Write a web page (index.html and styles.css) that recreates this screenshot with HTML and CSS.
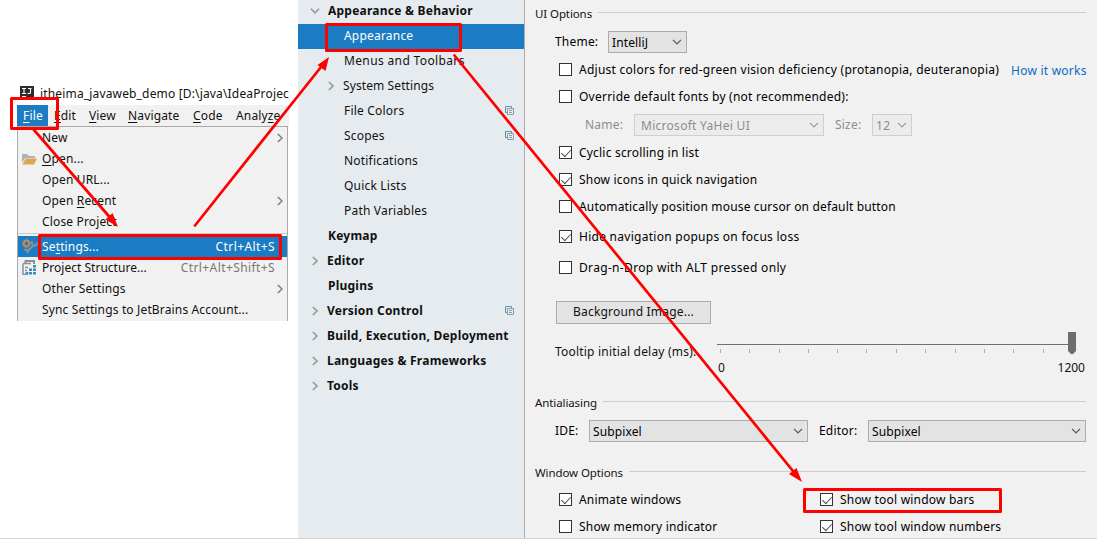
FILE: index.html
```html
<!DOCTYPE html>
<html lang="en">
<head>
<meta charset="utf-8">
<title>Settings</title>
<link rel="stylesheet" href="styles.css">
</head>
<body>
<svg class="defs" width="0" height="0">
  <symbol id="right" viewBox="0 0 6 10"><path d="M.8 1 5 5 .8 9"/></symbol>
  <symbol id="down" viewBox="0 0 10 6"><path d="M1 .8 5 4.8 9 .8"/></symbol>
  <symbol id="copy" viewBox="0 0 9 9"><path d="M2.500 6.500H.5V.5H6.500V2" stroke="#5b93b5"/><path d="M2.500 2.500H8.500V8.500H2.500ZM4 4.500H7M4 6.500H7" stroke="#929ba2"/></symbol>
</svg>
<main class="screen">
  <section class="ide">
    <header class="title">
      <svg width="14" height="13" viewBox="0 0 14 13"><rect width="14" height="13" fill="#2d2d30"/><path d="M2 2.500H6M4 2.500V7.500M2 7.500H6M8 2.500H11.500M10.500 2.500V6.500Q10.500 7.500 9.500 7.500H7.500M2 10.500H6" fill="none" stroke="#fff" stroke-width="1.100"/></svg>
      <span>itheima_javaweb_demo [D:\java\IdeaProjec</span>
    </header>
    <nav class="menubar">
      <span class="on"><u>F</u>ile</span><span class="m-edit"><u>E</u>dit</span><span class="m-view"><u>V</u>iew</span><span class="m-nav"><u>N</u>avigate</span><span class="m-code"><u>C</u>ode</span><span class="m-an">Analy<u>z</u>e</span>
    </nav>
    <div class="popup">
      <div class="item"><i></i><b>New</b><svg class="chev"><use href="#right"/></svg></div>
      <div class="item"><i><svg width="15" height="12" viewBox="0 0 15 12"><path d="M0 1H5L7 3H13V5H3L0 10Z" fill="#a9b4ba"/><path d="M3.500 5.500H15L12 11.500H.5Z" fill="#dca650"/></svg></i><b><u>O</u>pen...</b></div>
      <div class="item"><i></i><b>Open URL...</b></div>
      <div class="item"><i></i><b>Open <u>R</u>ecent</b><svg class="chev"><use href="#right"/></svg></div>
      <div class="item"><i></i><b>Close Project</b></div>
      <hr>
      <div class="item sel"><i><svg width="16" height="16" viewBox="0 0 16 16" fill="none"><circle cx="4.500" cy="4.500" r="2.800" stroke="#bb8959" stroke-width="2.200"/><path d="M4.500 0V1.500M4.500 7.500V9M0 4.500H1.500M7.500 4.500H9" stroke="#bb8959" stroke-width="1.600"/><path d="M4.500 13 12 6M10.500 2C9 4 10 7 12.500 6.500 14 6.500 15 5 15 3.500M2 11C4 9.500 7 11.500 5.500 14" stroke="#87919b" stroke-width="2"/></svg></i><b>Se<u>t</u>tings...</b><em>Ctrl+Alt+S</em></div>
      <div class="item"><i><svg width="15" height="15" viewBox="0 0 15 15"><path d="M2.500 0H13V4H11V2H4.500V3H2.500Z" fill="#87919b"/><path d="M1 3.500H9M1 3.500V14.500H5M3 7.500H6M3 10.500H5" fill="none" stroke="#87919b" stroke-width="1.500"/><path d="M11 5h3v2.500h-3zM7 8.500h3v2.500H7zM11 8.500h3v2.500h-3zM3.500 12h2.800v2.500H3.500zM7 12h3v2.500H7zM11 12h3v2.500h-3z" fill="#3d8db8"/></svg></i><b class="tight">Project Structure...</b><em>Ctrl+Alt+Shift+S</em></div>
      <div class="item"><i></i><b>Other Settings</b><svg class="chev"><use href="#right"/></svg></div>
      <div class="item"><i></i><b>Sync Settings to JetBrains Account...</b></div>
    </div>
  </section>

  <aside class="tree">
    <div class="node top"><svg class="tw open"><use href="#down"/></svg>Appearance &amp; Behavior</div>
    <div class="node sub on">Appearance</div>
    <div class="node sub">Menus and Toolbars</div>
    <div class="node sub par"><svg class="tw"><use href="#right"/></svg>System Settings</div>
    <div class="node sub">File Colors<svg class="copy"><use href="#copy"/></svg></div>
    <div class="node sub">Scopes<svg class="copy"><use href="#copy"/></svg></div>
    <div class="node sub">Notifications</div>
    <div class="node sub">Quick Lists</div>
    <div class="node sub">Path Variables</div>
    <div class="node top leaf">Keymap</div>
    <div class="node top"><svg class="tw"><use href="#right"/></svg>Editor</div>
    <div class="node top leaf">Plugins</div>
    <div class="node top"><svg class="tw"><use href="#right"/></svg>Version Control<svg class="copy"><use href="#copy"/></svg></div>
    <div class="node top"><svg class="tw"><use href="#right"/></svg>Build, Execution, Deployment</div>
    <div class="node top"><svg class="tw"><use href="#right"/></svg>Languages &amp; Frameworks</div>
    <div class="node top"><svg class="tw"><use href="#right"/></svg>Tools</div>
  </aside>

  <section class="panel">
    <h2>UI Options</h2>
    <div class="row fields"><label class="l-theme">Theme:</label><div class="combo c-theme">IntelliJ<svg><use href="#down"/></svg></div></div>
    <div class="row"><span class="box"></span><span class="adjust">Adjust colors for red-green vision deficiency (protanopia, deuteranopia)</span><a>How it works</a></div>
    <div class="row override"><span class="box"></span>Override default fonts by (not recommended):</div>
    <div class="row fields off"><label class="l-name">Name:</label><div class="combo c-name">Microsoft YaHei UI<svg><use href="#down"/></svg></div><label class="l-size">Size:</label><div class="combo c-size">12<svg><use href="#down"/></svg></div></div>
    <div class="row"><span class="box ck"></span>Cyclic scrolling in list</div>
    <div class="row"><span class="box ck"></span>Show icons in quick navigation</div>
    <div class="row auto"><span class="box"></span>Automatically position mouse cursor on default button</div>
    <div class="row hide"><span class="box ck"></span>Hide navigation popups on focus loss</div>
    <div class="row drag"><span class="box"></span>Drag-n-Drop with ALT pressed only</div>
    <div class="btn">Background Image...</div>
    <div class="delay">
      <label>Tooltip initial delay (ms):</label>
      <div class="slider">
        <svg width="369" height="26" viewBox="0 0 369 26"><path d="M0 12.500H352" stroke="#6e6e6e"/><path d="M3.500 17v4M32.500 17v4M62.500 17v4M91.500 17v4M120.500 17v4M149.500 17v4M179.500 17v4M208.500 17v4M238.500 17v4M267.500 17v4M296.500 17v4M326.500 17v4" stroke="#b0b0b0"/><path d="M351 0h8v19l-3 3h-2l-3-3z" fill="#6e6e6e"/></svg>
        <div class="ends"><span>0</span><span>1200</span></div>
      </div>
    </div>
    <h2>Antialiasing</h2>
    <div class="row fields"><label class="l-ide">IDE:</label><div class="combo c-ide">Subpixel<svg><use href="#down"/></svg></div><label class="l-editor">Editor:</label><div class="combo c-editor">Subpixel<svg><use href="#down"/></svg></div></div>
    <h2 class="win">Window Options</h2>
    <div class="pair"><div class="row auto"><span class="box ck"></span>Animate windows</div><div class="row"><span class="box ck"></span>Show tool window bars</div></div>
    <div class="pair"><div class="row"><span class="box"></span>Show memory indicator</div><div class="row"><span class="box ck"></span>Show tool window numbers</div></div>
  </section>

  <div class="baseline"></div>
  <svg class="marks" width="1097" height="540" viewBox="0 0 1097 540">
    <g fill="none" stroke="#f00" stroke-width="3" stroke-linejoin="round">
      <rect x="11.500" y="98.500" width="46" height="30"/>
      <rect x="39.500" y="235.500" width="241" height="23"/>
      <rect x="326.500" y="24.500" width="134" height="26"/>
      <rect x="804.500" y="489.500" width="196" height="22"/>
    </g>
    <g stroke="#f00" stroke-width="2.700" stroke-linecap="round"><path d="M34 130 110 217.500M195 225.500 321 67M454.500 55.500 795 473.500"/></g>
    <g fill="#f00"><path d="M118 227 105.500 219.500 112.500 213Z"/><path d="M329 57 325.500 71 317.500 65Z"/><path d="M802 482 789 474 796.500 468Z"/></g>
  </svg>
</main>
</body>
</html>
```
FILE: styles.css
```css
* { box-sizing: border-box; }
body { margin: 0; background: #fff; font: 12px/16px "Noto Sans", "Open Sans", sans-serif; letter-spacing: .2px; color: #111; }
.defs { position: absolute; }
u { text-underline-offset: 1.5px; text-decoration-thickness: 1px; }
.screen { position: relative; display: flex; width: 1097px; height: 540px; overflow: hidden; white-space: nowrap; }

/* IDE window with the File menu open */
.ide { width: 298px; flex: none; padding: 82px 0 0 17px; }
.title { display: flex; align-items: center; width: 272px; height: 23px; padding-left: 3px; gap: 6px; overflow: hidden; letter-spacing: .16px; }
.title svg { flex: none; margin-top: -3px; }
.menubar { display: flex; width: 272px; height: 21px; line-height: 22px; background: #f1f1f1; letter-spacing: .15px; }
.menubar .on { width: 31px; padding-left: 6px; background: #1b7bc3; color: #fff; }
.m-edit { width: 41px; padding-left: 6px; }
.m-view { width: 39px; }
.m-nav { width: 65px; }
.m-code { width: 43px; }
.popup { width: 271px; height: 195px; background: #f1f1f1; border: 1px solid #aaa; border-bottom: 0; }
.item { display: flex; align-items: center; height: 21px; padding: 0 12px 0 4px; letter-spacing: .15px; }
.item i { width: 20px; height: 16px; display: flex; align-items: center; }
.item b { font-weight: 400; flex: 1; }
.item .tight { letter-spacing: .02px; }
.item em { font-style: normal; color: #777; letter-spacing: .4px; }
.item .chev { margin-right: -8px; }
.popup hr { height: 1px; margin: 1px 0 2px; border: 0; background: #c9c9c9; }
.item.sel, .item.sel em { background: #1b7bc3; color: #fff; }
.chev, .tw { width: 6px; height: 10px; fill: none; stroke: #777; stroke-width: 1.3; }

/* settings tree */
.tree { width: 227px; flex: none; margin-top: -1px; background: #e6ebef; border-right: 1px solid #acacac; }
.node { display: flex; align-items: center; height: 25px; padding-bottom: 2px; }
.top { font-weight: 700; padding-left: 13px; letter-spacing: .23px; }
.leaf { padding-left: 30px; }
.sub { padding-left: 46px; }
.sub.par { padding-left: 29px; letter-spacing: .1px; }
.sub.on { background: #1b7bc3; color: #fff; }
.node:nth-child(3) { letter-spacing: .36px; }
.tw { margin: 0 9px 0 1px; stroke: #999; stroke-width: 1.6; }
.tw.open { width: 10px; height: 6px; margin: 0 8px 0 -1px; }
.copy { width: 9px; height: 9px; margin: 0 10px 0 auto; fill: none; }

/* appearance page */
.panel { flex: 1; padding: 0 11px 0 10px; background: #f1f1f1; }
.panel h2 { display: flex; align-items: center; height: 28px; margin: 0; font-size: 11.5px; font-weight: 400; letter-spacing: -.1px; }
.panel h2::after { content: ""; flex: 1; height: 1px; margin: -3px 1px 0 6px; background: #cdcdcd; }
.row { display: flex; align-items: center; height: 27px; padding-left: 24px; color: #000; }
.row.auto { letter-spacing: .16px; }
.row.override { letter-spacing: .24px; }
.fields { height: 28px; padding-left: 20px; }
.box { width: 13px; height: 13px; margin-right: 7px; background: #fff; border: 1px solid #333; flex: none; }
.ck::after { content: ""; display: block; width: 9px; height: 5px; margin: 2px 0 0 1px; border: solid #444; border-width: 0 0 1.5px 1.5px; transform: rotate(-47deg) scale(.9); }
.adjust { width: 432px; letter-spacing: .26px; }
.row a { color: #0a6cc2; letter-spacing: .24px; padding-top: 2px; }
.combo { display: flex; align-items: center; justify-content: space-between; height: 22px; padding: 1px 4px 0 3px; background: #e3e3e3; border: 1px solid #acacac; letter-spacing: .12px; }
.combo svg { width: 10px; height: 6px; margin-top: -2px; fill: none; stroke: #555; stroke-width: 1.2; }
.l-theme { width: 53px; }
.c-theme { width: 79px; }
.off { height: 29px; padding: 1px 0 0 50px; color: #8c8c8c; }
.off .combo { background: #ececec; border-color: #cfcfcf; padding-left: 6px; letter-spacing: .28px; }
.off .combo svg { stroke: #999; }
.l-name { width: 49px; }
.off .c-name { width: 190px; }
.l-size { width: 48px; padding-left: 11px; }
.off .c-size { width: 40px; padding-left: 3px; }
.hide { margin-top: 3px; letter-spacing: .27px; }
.drag { margin-top: 4px; letter-spacing: .33px; }
.btn { width: 155px; height: 23px; margin: 20px 0 0 21px; line-height: 20px; text-align: center; background: #e3e3e3; border: 1px solid #acacac; }
.delay { display: flex; height: 65px; padding: 8px 0 0 20px; }
.delay label { width: 162px; padding-top: 12px; flex: none; }
.slider { width: 369px; }
.slider svg { display: block; }
.ends { display: flex; justify-content: space-between; padding: 2px 1px 0 1px; letter-spacing: 0; }
.l-ide { width: 34px; }
.c-ide { width: 219px; }
.l-editor { width: 60px; padding-left: 11px; }
.c-editor { width: 218px; margin-right: -1px; }
.panel h2.win { height: 27px; margin-top: 14px; }
.pair { display: grid; grid-template-columns: 261px 1fr; }

/* bottom edge and callouts drawn over the screen */
.baseline { position: absolute; left: 0; right: 0; top: 538px; height: 2px; background: #fff; border-top: 1px solid #d4d4d4; }
.marks { position: absolute; left: 0; top: 0; }
```
